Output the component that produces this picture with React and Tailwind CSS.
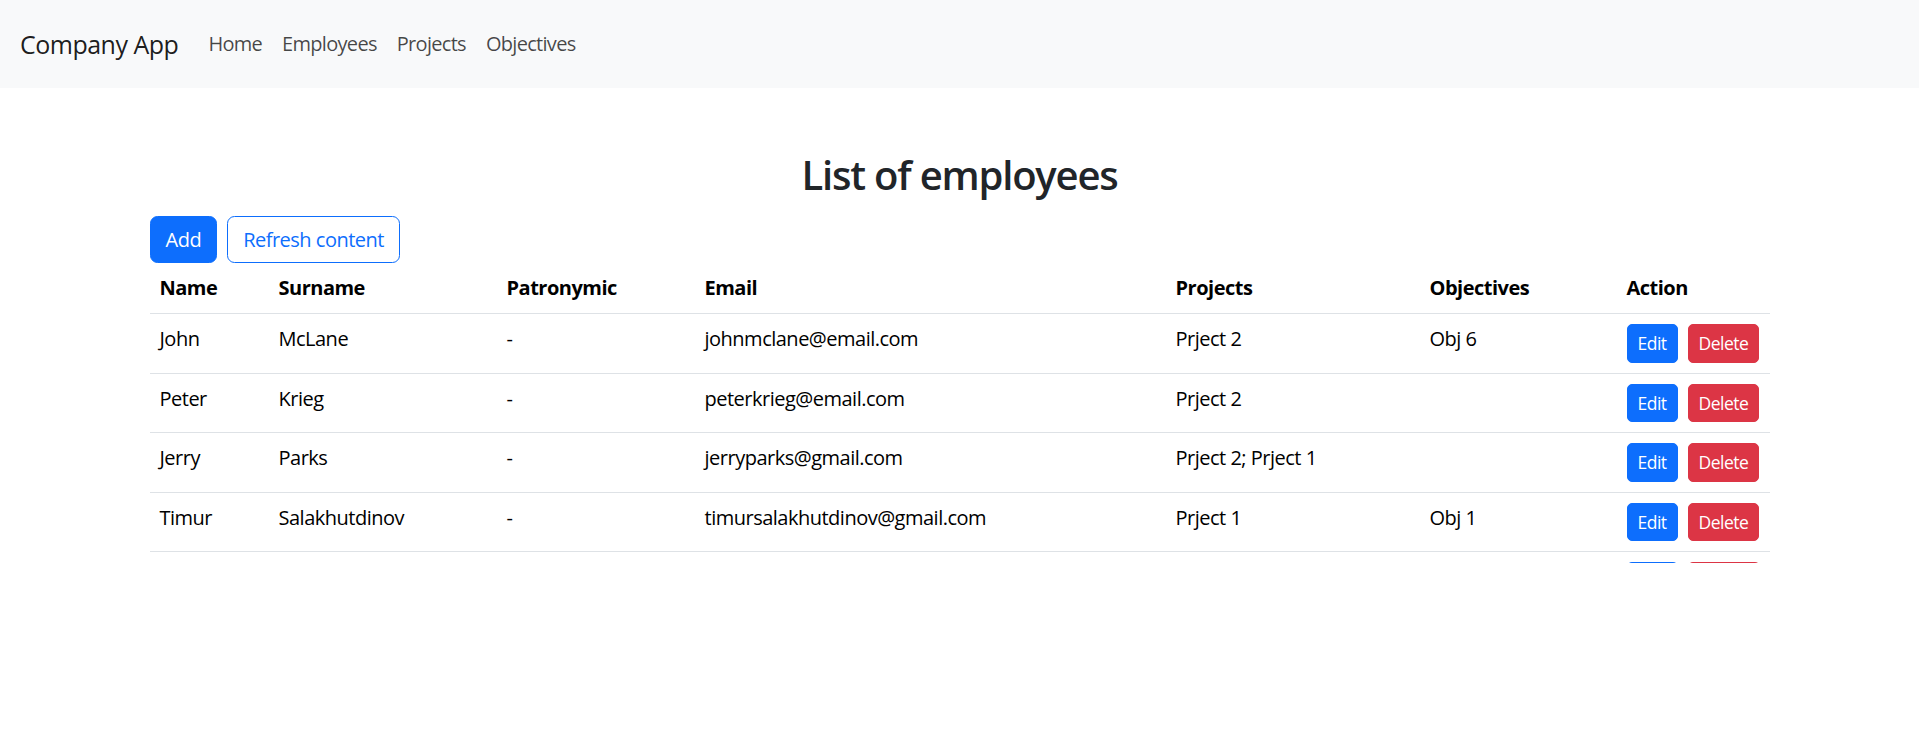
import React from "react";

const rows = [
  { name: "John", surname: "McLane", patronymic: "-", email: "johnmclane@email.com", projects: "Prject 2", objectives: "Obj 6" },
  { name: "Peter", surname: "Krieg", patronymic: "-", email: "peterkrieg@email.com", projects: "Prject 2", objectives: "" },
  { name: "Jerry", surname: "Parks", patronymic: "-", email: "jerryparks@gmail.com", projects: "Prject 2; Prject 1", objectives: "" },
  { name: "Timur", surname: "Salakhutdinov", patronymic: "-", email: "timursalakhutdinov@gmail.com", projects: "Prject 1", objectives: "Obj 1" },
];

function Cell({ children }) {
  return (
    <td className="px-[10px] py-[10px] align-top leading-[30px] border-b border-[#dee2e6]">{children}</td>
  );
}

export default function App() {
  return (
    <div className="min-h-[756px] bg-white font-['Open_Sans','Noto_Sans',sans-serif] text-[20px] tracking-[-0.025em] text-[#212529]">
      <nav className="flex h-[88px] items-center bg-[#f8f9fa] px-[20px]">
        <a className="mr-[20px] text-[25px] leading-[38px] text-[rgba(0,0,0,0.9)]">Company App</a>
        <ul className="flex items-center">
          {["Home", "Employees", "Projects", "Objectives"].map((l) => (
            <li key={l}>
              <a className="block px-[10px] leading-[30px] tracking-[-0.035em] text-[rgba(0,0,0,0.72)]">{l}</a>
            </li>
          ))}
        </ul>
      </nav>

      <main className="mx-auto w-[1650px] px-[15px]">
        <h2 className="mt-[63px] mb-[17px] text-center text-[40px] font-semibold leading-[48px] tracking-[-0.03em] text-[#212529]">
          List of employees
        </h2>
        <div className="flex gap-[10px]">
          <button className="h-[47px] rounded-[7.5px] border border-[#0d6efd] bg-[#0d6efd] px-[15px] text-[20px] text-white">
            Add
          </button>
          <button className="h-[47px] rounded-[7.5px] border border-[#0d6efd] bg-white px-[15px] text-[20px] text-[#0d6efd]">
            Refresh content
          </button>
        </div>
        <div className="h-[300px] overflow-hidden">
          <table className="w-full table-fixed border-collapse text-left text-black">
            <colgroup>
              <col className="w-[119px]" />
              <col className="w-[228px]" />
              <col className="w-[198px]" />
              <col className="w-[471px]" />
              <col className="w-[254px]" />
              <col className="w-[197px]" />
              <col className="w-[153px]" />
            </colgroup>
            <thead>
              <tr>
                {["Name", "Surname", "Patronymic", "Email", "Projects", "Objectives", "Action"].map((h) => (
                  <th key={h} className="px-[10px] py-[10px] align-bottom font-bold leading-[30px] border-b border-[#dee2e6]">
                    {h}
                  </th>
                ))}
              </tr>
            </thead>
            <tbody>
              {rows.map((r, i) => (
                <tr key={i}>
                  <Cell>{r.name}</Cell>
                  <Cell>{r.surname}</Cell>
                  <Cell>{r.patronymic}</Cell>
                  <Cell>{r.email}</Cell>
                  <Cell>{r.projects}</Cell>
                  <Cell>{r.objectives}</Cell>
                  <td className="px-[10px] py-[10px] align-top border-b border-[#dee2e6]">
                    <div className="flex gap-[10px]">
                      <button className="inline-flex h-[38.5px] items-center rounded-[5px] border border-[#0d6efd] bg-[#0d6efd] px-[10px] text-[17.5px] text-white">
                        Edit
                      </button>
                      <button className="inline-flex h-[38.5px] items-center rounded-[5px] border border-[#dc3545] bg-[#dc3545] px-[10px] text-[17.5px] text-white">
                        Delete
                      </button>
                    </div>
                  </td>
                </tr>
              ))}
              <tr>
                <td className="h-[59.5px] border-b border-[#dee2e6]" />
                <td className="border-b border-[#dee2e6]" />
                <td className="border-b border-[#dee2e6]" />
                <td className="border-b border-[#dee2e6]" />
                <td className="border-b border-[#dee2e6]" />
                <td className="border-b border-[#dee2e6]" />
                <td className="px-[10px] py-[10px] align-top border-b border-[#dee2e6]">
                  <div className="flex gap-[10px]">
                    <span className="block h-[38.5px] w-[51px] rounded-[5px] bg-[#0d6efd]" />
                    <span className="block h-[38.5px] w-[72px] rounded-[5px] bg-[#dc3545]" />
                  </div>
                </td>
              </tr>
            </tbody>
          </table>
        </div>
      </main>
    </div>
  );
}
